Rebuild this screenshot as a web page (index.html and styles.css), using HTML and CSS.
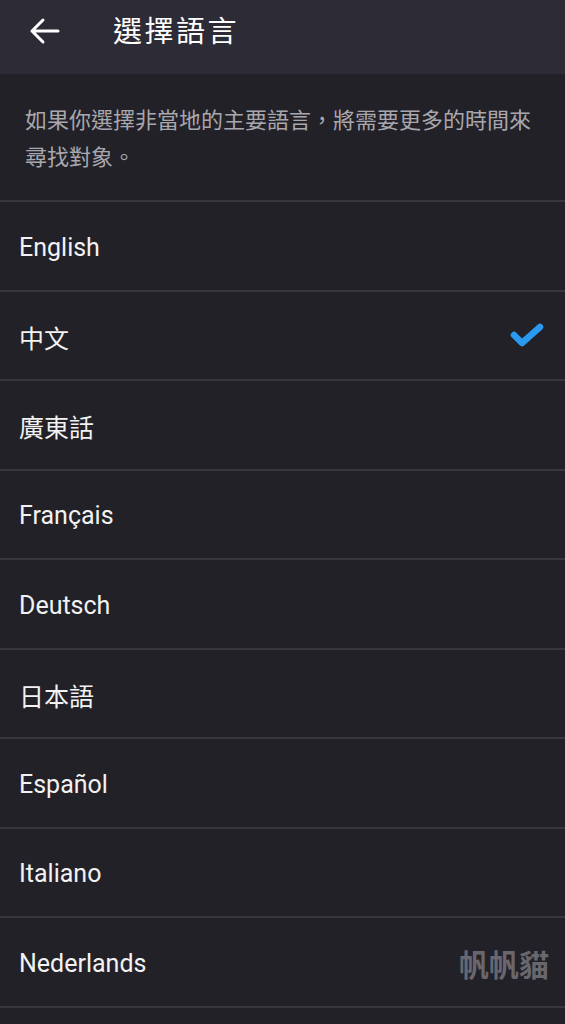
FILE: index.html
```html
<!DOCTYPE html>
<html lang="zh-Hant">
<head>
    <meta charset="UTF-8">
    <meta name="viewport" content="width=device-width, initial-scale=1.0">
    <title>選擇語言</title>
    <link rel="stylesheet" href="styles.css">
</head>
<body>
    <!-- Barra superior -->
    <div class="topbar">
        <a class="back" href="#">
            <svg width="32" height="28" viewBox="0 0 32 28">
                <path d="M30 14H4M15 3L4 14l11 11" fill="none" stroke="#fff" stroke-width="3" stroke-linecap="round" stroke-linejoin="round"/>
            </svg>
        </a>
        <div class="title">選擇語言</div>
    </div>

    <p class="note">如果你選擇非當地的主要語言，將需要更多的時間來尋找對象。</p>

    <ul class="langs">
        <li>English</li>
        <li class="selected">中文
            <svg class="check" width="36" height="28" viewBox="0 0 36 28">
                <path d="M5 14l8 8L31 6" fill="none" stroke="#2a9af0" stroke-width="6.5" stroke-linecap="round" stroke-linejoin="round"/>
            </svg>
        </li>
        <li>廣東話</li>
        <li>Français</li>
        <li>Deutsch</li>
        <li>日本語</li>
        <li>Español</li>
        <li>Italiano</li>
        <li>Nederlands</li>
        <li></li>
    </ul>

    <div class="watermark">帆帆貓</div>
</body>
</html>
```
FILE: styles.css
```css
body {
    margin: 0;
    padding: 0;
    background-color: #222128;
    color: #f2f2f2;
    font-family: Roboto, "Noto Sans CJK TC", sans-serif;
    overflow: hidden;
    position: relative;
    height: 1024px;
}
.topbar {
    height: 74px;
    box-sizing: border-box;
    background-color: #2d2c36;
    display: flex;
    align-items: flex-start;
    padding: 16px 0 0 28px;
}
.back {
    display: flex;
    width: 32px;
    padding-top: 1px;
}
.title {
    margin-left: 53px;
    font-size: 29px;
    line-height: 32px;
    letter-spacing: 2.5px;
    color: #fff;
}
.note {
    margin: 0;
    padding: 28px 25px 0 25px;
    height: 98px;
    font-size: 22px;
    line-height: 37px;
    color: #a8a7ad;
}
.langs {
    list-style: none;
    margin: 0;
    padding: 0;
    border-top: 2px solid #38373e;
}
.langs li {
    height: 84.5px;
    border-bottom: 2px solid #38373e;
    display: flex;
    align-items: center;
    justify-content: space-between;
    padding: 3px 20px 0 19px;
    font-size: 25px;
    box-sizing: content-box;
}
.check {
    margin-top: -3px;
}
.watermark {
    position: absolute;
    right: 16px;
    top: 941px;
    font-size: 30px;
    font-weight: bold;
    color: #68676d;
    font-family: "Noto Sans CJK TC", sans-serif;
}
```
